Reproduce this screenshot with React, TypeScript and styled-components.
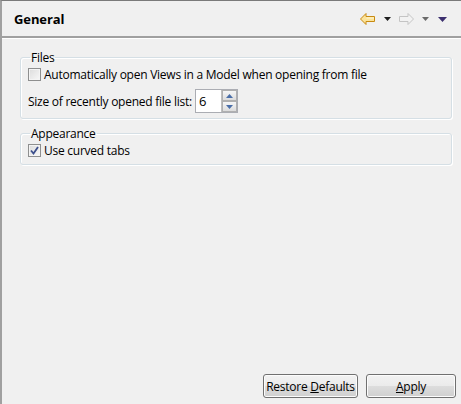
import React from "react";
import styled, { createGlobalStyle } from "styled-components";

const Global = createGlobalStyle`
  html, body { margin: 0; padding: 0; background: #f0f0f0; }
  body { font-family: "Open Sans", "Noto Sans", sans-serif; font-size: 12px; color: #000; letter-spacing: -0.25px; }
  #root { width: 461px; height: 404px; }
`;

const Page = styled.div`
  width: 461px;
  height: 404px;
  box-sizing: border-box;
  border-top: 1px solid #7a7a7a;
  border-left: 2px solid #a0a0a0;
  background: #f0f0f0;
  display: flex;
  flex-direction: column;
`;

const Header = styled.div`
  height: 35px;
  display: flex;
  align-items: center;
  justify-content: space-between;
  padding: 0 12px 0 12px;
  border-bottom: 2px solid #a0a0a0;
  box-shadow: 0 1px 0 #ffffff;
`;

const Title = styled.div`
  font-family: "Open Sans", sans-serif;
  font-weight: 700;
  font-size: 13px;
  letter-spacing: -0.1px;
  margin-top: 1px;
`;

const Tools = styled.div`
  display: flex;
  align-items: center;
  margin-top: 1px;
`;

const ToolSlot = styled.div<{ $w: number }>`
  width: ${(p) => p.$w}px;
  display: flex;
  align-items: center;
  justify-content: center;
`;

const Body = styled.div`
  flex: 1;
  display: flex;
  flex-direction: column;
  padding: 12px 9px 0 18px;
  gap: 7px;
`;

const Group = styled.fieldset`
  margin: 0;
  padding: 1px 6px 5px 7px;
  border: 1px solid #d5dfe5;
  border-radius: 3px;
  box-shadow: inset 1px 1px 0 #fff, 1px 1px 0 #fff;
  display: flex;
  flex-direction: column;
  gap: 6px;
`;

const Legend = styled.legend`
  padding: 0 1px;
  margin-left: 2px;
  font-size: 12px;
  line-height: 15px;
`;

const Row = styled.div`
  display: flex;
  align-items: center;
  height: 17px;
`;

const Box = styled.span`
  width: 11px;
  height: 11px;
  border: 1px solid #8e8f8f;
  background: linear-gradient(135deg, #dcdcdc, #f8f8f8);
  box-shadow: inset 0 0 0 1px #f4f4f4;
  margin-right: 3px;
  display: inline-flex;
  align-items: center;
  justify-content: center;
`;

const Label = styled.span`
  font-size: 12px;
  white-space: nowrap;
`;

const SpinRow = styled.div`
  display: flex;
  align-items: center;
  height: 24px;
`;

const SpinField = styled.div`
  margin-left: 3px;
  display: flex;
  height: 22px;
  border: 1px solid #abadb3;
  background: #fff;
`;

const SpinValue = styled.div`
  width: 22px;
  padding-left: 3px;
  display: flex;
  align-items: center;
  font-size: 13px;
`;

const SpinButtons = styled.div`
  display: flex;
  flex-direction: column;
  width: 15px;
  border-left: 1px solid #c0c0c0;
`;

const SpinBtn = styled.div`
  flex: 1;
  display: flex;
  align-items: center;
  justify-content: center;
  border: 1px solid #b0b0b0;
  background: linear-gradient(#f6f6f6, #dcdcdc);
`;

const Spacer = styled.div`
  flex: 1;
`;

const Footer = styled.div`
  display: flex;
  justify-content: flex-end;
  gap: 8px;
  padding: 0 5px 6px 0;
`;

const Button = styled.button<{ $w: number }>`
  width: ${(p) => p.$w}px;
  height: 24px;
  font-family: "Open Sans", sans-serif;
  font-size: 12px;
  letter-spacing: -0.25px;
  color: #000;
  border: 1px solid #707070;
  border-radius: 3px;
  background: linear-gradient(#f2f2f2 0%, #ebebeb 50%, #dddddd 51%, #cfcfcf 100%);
  box-shadow: inset 0 0 0 1px #fcfcfc;
  padding: 0;
`;

const U = styled.span`
  text-decoration: underline;
`;

const Tri = ({ color }: { color: string }) => (
  <svg width="7" height="4" viewBox="0 0 7 4">
    <path d="M0 0H7L3.5 4Z" fill={color} />
  </svg>
);

const BackArrow = () => (
  <svg width="16" height="12" viewBox="0 0 16 12">
    <path
      d="M0.5 6L6 0.5V3.5H14.5V8.5H6V11.5Z"
      fill="#fbe39a"
      stroke="#c88a10"
      strokeLinejoin="round"
    />
    <path d="M6.5 4.5H14V5.5H6.5Z" fill="#fff6d2" />
  </svg>
);

const FwdArrow = () => (
  <svg width="16" height="12" viewBox="0 0 16 12">
    <path
      d="M15.5 6L10 0.5V3.5H1.5V8.5H10V11.5Z"
      fill="#f2f2f2"
      stroke="#c4c4c4"
      strokeLinejoin="round"
    />
  </svg>
);

const Check = () => (
  <svg width="9" height="9" viewBox="0 0 9 9">
    <path d="M1 4.5L3.5 7.5L8 1" fill="none" stroke="#3c4f8c" strokeWidth="1.8" />
  </svg>
);

const Up = () => (
  <svg width="7" height="4" viewBox="0 0 7 4">
    <path d="M0 4H7L3.5 0Z" fill="#4a6ea8" />
  </svg>
);

export default function App() {
  return (
    <>
      <Global />
      <Page>
        <Header>
          <Title>General</Title>
          <Tools>
            <ToolSlot $w={18}><BackArrow /></ToolSlot>
            <ToolSlot $w={20}><Tri color="#1e1e1e" /></ToolSlot>
            <ToolSlot $w={18}><FwdArrow /></ToolSlot>
            <ToolSlot $w={20}><Tri color="#6a6a6a" /></ToolSlot>
            <ToolSlot $w={14}>
              <svg width="9" height="5" viewBox="0 0 9 5">
                <path d="M0 0H9L4.5 5Z" fill="#3b2f6e" />
              </svg>
            </ToolSlot>
          </Tools>
        </Header>
        <Body>
          <Group>
            <Legend>Files</Legend>
            <Row>
              <Box />
              <Label>Automatically open Views in a Model when opening from file</Label>
            </Row>
            <SpinRow>
              <Label>Size of recently opened file list:</Label>
              <SpinField>
                <SpinValue>6</SpinValue>
                <SpinButtons>
                  <SpinBtn><Up /></SpinBtn>
                  <SpinBtn><Tri color="#4a6ea8" /></SpinBtn>
                </SpinButtons>
              </SpinField>
            </SpinRow>
          </Group>
          <Group>
            <Legend>Appearance</Legend>
            <Row>
              <Box><Check /></Box>
              <Label>Use curved tabs</Label>
            </Row>
          </Group>
          <Spacer />
        </Body>
        <Footer>
          <Button $w={95}>Restore <U>D</U>efaults</Button>
          <Button $w={90}><U>A</U>pply</Button>
        </Footer>
      </Page>
    </>
  );
}
